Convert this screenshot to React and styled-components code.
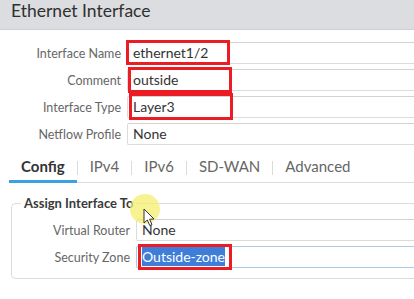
import styled, { createGlobalStyle } from "styled-components";

const GlobalStyle = createGlobalStyle`
  html, body {
    margin: 0;
    padding: 0;
    background: #ffffff;
    overflow: hidden;
  }
  body {
    font-family: Lato, "Open Sans", "Liberation Sans", sans-serif;
  }
`;

// mark: hand-drawn red box around the field, offsets relative to the field
const mainRows = [
  { label: "Interface Name", value: "ethernet1/2", mark: { x: -2, y: -3, w: 104, h: 25 } },
  { label: "Comment", value: "outside", mark: { x: 0, y: -3, w: 104, h: 26 } },
  { label: "Interface Type", value: "Layer3", mark: { x: 1, y: -4, w: 104, h: 27 } },
  { label: "Netflow Profile", value: "None" },
];

const tabs = ["Config", "IPv4", "IPv6", "SD-WAN", "Advanced"];

const App = () => {
  return (
    <Page>
      <GlobalStyle />
      <Header>Ethernet Interface</Header>
      <Form>
        {mainRows.map((row) => (
          <Row key={row.label} $labelWidth={121}>
            <Label>{row.label}</Label>
            <Field>
              {row.value}
              {row.mark && (
                <Mark $x={row.mark.x} $y={row.mark.y} $w={row.mark.w} $h={row.mark.h} />
              )}
            </Field>
          </Row>
        ))}
      </Form>
      <TabBar>
        {tabs.map((tab, i) => (
          <TabItem key={tab}>
            {i > 0 && <TabDivider />}
            <Tab $active={i === 0}>{tab}</Tab>
          </TabItem>
        ))}
        <TabRest />
      </TabBar>
      <Group>
        <Legend>Assign Interface To</Legend>
        <Row $labelWidth={118}>
          <Label>Virtual Router</Label>
          <Field>None</Field>
        </Row>
        <Row $labelWidth={118}>
          <Label>Security Zone</Label>
          <Field $focused>
            <Selected>Outside-zone</Selected>
            <Mark $x={1} $y={-3} $w={94} $h={26} />
          </Field>
        </Row>
      </Group>
      <ClickHalo />
      <Pointer width="12" height="19" viewBox="0 0 12 19">
        <path
          d="M1 1 L1 15 L4.3 12 L6.8 17.6 L9 16.6 L6.6 11.2 L11 11 Z"
          fill="#ffffff"
          stroke="#333333"
          strokeWidth="1"
          strokeLinejoin="round"
        />
      </Pointer>
    </Page>
  );
};

const Page = styled.div`
  position: relative;
  width: 414px;
  height: 299px;
  overflow: hidden;
`;

const Header = styled.div`
  height: 30px;
  box-sizing: border-box;
  padding: 0 11px;
  background: #dcdde0;
  border-bottom: 1px solid #cfd0d3;
  font-size: 17.5px;
  line-height: 22px;
  color: #2f2f2f;
`;

const Form = styled.div`
  display: flex;
  flex-direction: column;
  gap: 5px;
  padding-top: 12px;
`;

const Row = styled.div`
  display: grid;
  grid-template-columns: ${(p) => p.$labelWidth}px 1fr;
  column-gap: 6px;
  align-items: center;
  height: 22px;
`;

const Label = styled.div`
  text-align: right;
  font-size: 12.5px;
  color: #666;
  white-space: nowrap;
`;

const Field = styled.div`
  position: relative;
  height: 22px;
  box-sizing: border-box;
  padding: 0 5px;
  border: 1px solid ${(p) => (p.$focused ? "#a9cde6" : "#dcdcdc")};
  border-top-color: ${(p) => (p.$focused ? "#a9cde6" : "#d2d2d2")};
  border-right: none;
  border-radius: 2px 0 0 2px;
  font-size: 14px;
  line-height: 20px;
  color: #333;
  background: #fff;
`;

const Mark = styled.div`
  position: absolute;
  left: ${(p) => p.$x}px;
  top: ${(p) => p.$y}px;
  width: ${(p) => p.$w}px;
  height: ${(p) => p.$h}px;
  box-sizing: border-box;
  border: 3px solid #ec1c24;
`;

const Selected = styled.span`
  background: #3d7ed8;
  color: #fff;
  padding: 1px 0;
`;

const TabBar = styled.div`
  display: flex;
  align-items: stretch;
  margin-top: 12px;
  padding-left: 9px;
  height: 26px;
`;

const TabItem = styled.div`
  display: flex;
  align-items: center;
  border-bottom: 1px solid #dedede;
`;

const TabDivider = styled.span`
  width: 1px;
  height: 14px;
  background: #dcdcdc;
  margin-top: -4px;
`;

const Tab = styled.div`
  align-self: stretch;
  display: flex;
  align-items: center;
  padding: 0 12px 5px;
  margin-bottom: -1px;
  font-size: 15px;
  font-weight: ${(p) => (p.$active ? 700 : 400)};
  color: ${(p) => (p.$active ? "#333" : "#666")};
  border-bottom: 3px solid ${(p) => (p.$active ? "#3aa2e1" : "transparent")};
  box-sizing: border-box;
`;

const TabRest = styled.div`
  flex: 1;
  border-bottom: 1px solid #dedede;
`;

const Group = styled.fieldset`
  display: flex;
  flex-direction: column;
  gap: 5px;
  margin: 12px 0 0 11px;
  padding: 8px 0 10px 0;
  border: 1px solid #dcdcdc;
  border-right: none;
  border-radius: 5px 0 0 5px;
`;

const Legend = styled.legend`
  margin-left: 9px;
  padding: 0 3px;
  font-size: 13px;
  font-weight: 700;
  color: #3a3a3a;
`;

const ClickHalo = styled.div`
  position: absolute;
  left: 130px;
  top: 194px;
  width: 30px;
  height: 30px;
  border-radius: 50%;
  background: rgba(244, 238, 110, 0.75);
`;

const Pointer = styled.svg`
  position: absolute;
  left: 143px;
  top: 208px;
`;

export default App;
